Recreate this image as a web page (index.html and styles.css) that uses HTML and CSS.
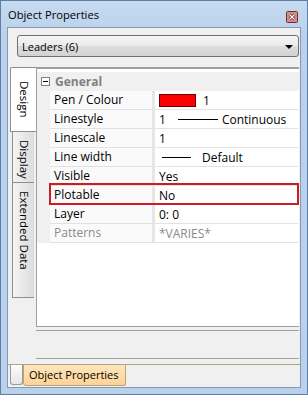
FILE: index.html
```html
<!DOCTYPE html>
<html lang="en">
<head>
  <meta charset="UTF-8">
  <title>Object Properties</title>
  <link rel="stylesheet" href="styles.css">
</head>
<body>
  <div class="window">
    <div class="titlebar">
      <span class="title">Object Properties</span>
      <span class="close">
        <svg width="12" height="12" viewBox="0 0 12 12">
          <rect x="0.5" y="0.5" width="11" height="11" rx="1" fill="#d98a8a" stroke="#6b2f2f"/>
          <path d="M3.5 3.5 L8.5 8.5 M8.5 3.5 L3.5 8.5" stroke="#5a2020" stroke-width="2.6"/>
          <path d="M3.5 3.5 L8.5 8.5 M8.5 3.5 L3.5 8.5" stroke="#fff" stroke-width="1.3"/>
        </svg>
      </span>
    </div>
    <div class="client">
      <div class="combo">
        <span>Leaders (6)</span>
        <span class="arrow"></span>
      </div>

      <div class="main">
        <div class="sidetabs">
          <div class="stab active">Design</div>
          <div class="stab">Display</div>
          <div class="stab tall">Extended Data</div>
        </div>

        <div class="panel">
          <div class="grid">
            <div class="cat">
              <span class="gutter"><span class="toggle"></span></span>
              <span class="cat-name">General</span>
            </div>
            <div class="row">
              <span class="gutter"></span>
              <span class="name">Pen / Colour</span>
              <span class="val"><span class="swatch"></span>1</span>
            </div>
            <div class="row">
              <span class="gutter"></span>
              <span class="name">Linestyle</span>
              <span class="val">1<span class="line ls"></span>Continuous</span>
            </div>
            <div class="row">
              <span class="gutter"></span>
              <span class="name">Linescale</span>
              <span class="val">1</span>
            </div>
            <div class="row">
              <span class="gutter"></span>
              <span class="name">Line width</span>
              <span class="val"><span class="line lw"></span>Default</span>
            </div>
            <div class="row">
              <span class="gutter"></span>
              <span class="name">Visible</span>
              <span class="val">Yes</span>
            </div>
            <div class="row marked">
              <span class="gutter"></span>
              <span class="name">Plotable</span>
              <span class="val">No</span>
            </div>
            <div class="row">
              <span class="gutter"></span>
              <span class="name">Layer</span>
              <span class="val">0: 0</span>
            </div>
            <div class="row muted">
              <span class="gutter"></span>
              <span class="name">Patterns</span>
              <span class="val">*VARIES*</span>
            </div>
          </div>
          <div class="desc"></div>
        </div>
      </div>

      <div class="bottomtabs">
        <div class="btab blank"></div>
        <div class="btab current">Object Properties</div>
      </div>
    </div>
  </div>
</body>
</html>
```

FILE: styles.css
```css
body {
  margin: 0;
  padding: 0;
  background: #fff;
  font-family: 'Open Sans', 'Noto Sans', Arial, sans-serif;
  font-size: 11px;
  color: #000;
}

/* Window frame */
.window {
  width: 308px;
  height: 395px;
  box-sizing: border-box;
  border: 1px solid #5f7fa6;
  padding: 0 6px 6px 6px;
  background: linear-gradient(#c6daf0, #b9d1ea 40px, #b9d1ea);
  display: flex;
  flex-direction: column;
}

.titlebar {
  height: 26px;
  display: flex;
  align-items: center;
  justify-content: space-between;
  padding: 0 3px 0 1px;
}

.title {
  font-size: 11.2px;
  margin-top: 1px;
}

.close {
  display: flex;
  margin-top: 6px;
}

.client {
  flex: 1;
  border: 1px solid #8497b3;
  background: #f0f0f0;
  display: flex;
  flex-direction: column;
  min-height: 0;
}

/* Combo box */
.combo {
  height: 22px;
  box-sizing: border-box;
  margin: 7px 1px 0 9px;
  border: 1px solid #707070;
  border-radius: 3px;
  background: linear-gradient(#f4f4f4, #ebebeb 50%, #dddddd 51%, #d2d2d2);
  display: flex;
  align-items: center;
  justify-content: space-between;
  padding: 0 5px 0 4px;
}

.arrow {
  width: 0;
  height: 0;
  border-left: 4px solid transparent;
  border-right: 4px solid transparent;
  border-top: 4px solid #000;
  margin-top: 1px;
}

/* Side tabs + grid */
.main {
  flex: 1;
  display: flex;
  margin-top: 10px;
  min-height: 0;
}

.sidetabs {
  width: 26px;
  margin-left: 2px;
  display: flex;
  flex-direction: column;
  align-items: flex-end;
}

.stab {
  writing-mode: vertical-rl;
  box-sizing: border-box;
  width: 22px;
  height: 51px;
  margin-right: 2px;
  padding-top: 8px;
  padding-right: 2px;
  border: 1px solid #8c8e94;
  border-right: none;
  border-top: none;
  background: linear-gradient(to right, #f4f4f4, #dcdcdc);
  font-size: 11.5px;
  color: #000;
  white-space: nowrap;
}

.stab.active {
  width: 26px;
  height: 65px;
  margin-right: 0;
  padding-top: 13px;
  padding-right: 4px;
  border-top: 1px solid #8c8e94;
  border-radius: 2px 0 0 0;
  background: #fff;
}

.stab.tall {
  height: 115px;
}

.panel {
  flex: 1;
  display: flex;
  flex-direction: column;
  margin-right: 1px;
}

.grid {
  flex: 1;
  background: #fff;
  border-top: 2px solid #a0a0a0;
  border-left: 1px solid #a0a0a0;
  border-bottom: 1px solid #a0a0a0;
  padding-top: 3px;
  font-size: 12px;
}

.cat,
.row {
  height: 19px;
  box-sizing: border-box;
  display: flex;
  align-items: stretch;
  position: relative;
}

.cat {
  background: #f0f0f0;
}

.gutter {
  width: 13px;
  flex-shrink: 0;
  background: #f0f0f0;
  display: flex;
  align-items: center;
  justify-content: center;
}

.toggle {
  width: 9px;
  height: 9px;
  box-sizing: border-box;
  border: 1px solid #808080;
  background: #fff;
  position: relative;
  margin-left: 3px;
}

.toggle::after {
  content: "";
  position: absolute;
  left: 1px;
  top: 3px;
  width: 5px;
  height: 1px;
  background: #000;
}

.cat-name {
  font-weight: bold;
  color: #808080;
  padding-left: 5px;
  line-height: 19px;
}

.name {
  width: 105px;
  flex-shrink: 0;
  box-sizing: border-box;
  padding-left: 4px;
  line-height: 18px;
  background: #fafafa;
  border-bottom: 1px solid #e2e2e2;
  border-right: 3px solid #e6e6e6;
  white-space: nowrap;
}

.val {
  flex: 1;
  display: flex;
  align-items: center;
  padding-left: 4px;
  border-bottom: 1px solid #e2e2e2;
  margin-right: 1px;
  white-space: nowrap;
}

.swatch {
  width: 37px;
  height: 13px;
  box-sizing: border-box;
  background: #f00;
  border: 1px solid #600;
  margin-right: 7px;
}

.line {
  height: 1px;
  background: #000;
}

.line.ls {
  width: 40px;
  margin: 0 4px 0 12px;
}

.line.lw {
  width: 29px;
  margin: 0 11px 0 3px;
}

.muted .name,
.muted .val {
  color: #8a8a8a;
}

.marked::after {
  content: "";
  position: absolute;
  left: 12px;
  right: 0;
  top: -3px;
  bottom: 0;
  border: 2px solid #cd1d24;
}

.desc {
  height: 27px;
  margin-top: 3px;
  margin-bottom: 5px;
  border-top: 1px solid #a0a0a0;
  border-bottom: 1px solid #a0a0a0;
  background: #f0f0f0;
}

/* Bottom tab strip */
.bottomtabs {
  height: 23px;
  box-sizing: border-box;
  border-top: 1px solid #b4a284;
  display: flex;
  align-items: flex-start;
  padding-left: 2px;
}

.btab {
  height: 20px;
  box-sizing: border-box;
  border: 1px solid #9a9a9a;
  border-top: none;
  border-radius: 0 0 3px 3px;
}

.btab.blank {
  width: 13px;
  background: linear-gradient(#fbfbfb, #e6e6e6);
}

.btab.current {
  width: 103px;
  height: 21px;
  border-color: #c0a173;
  background: linear-gradient(#fee6bd, #fdd396);
  padding-left: 5px;
  line-height: 19px;
  font-size: 11px;
  white-space: nowrap;
}
```
